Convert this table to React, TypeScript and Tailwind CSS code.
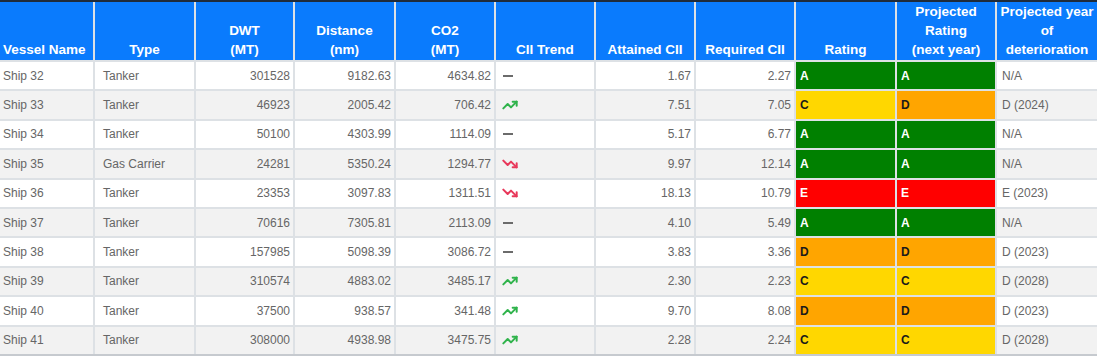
import React from "react"
import { TrendingUp, TrendingDown } from "lucide-react"

type Trend = "flat" | "up" | "down"

const rows: [string, string, string, string, string, Trend, string, string, string, string, string][] = [
  ["Ship 32", "Tanker", "301528", "9182.63", "4634.82", "flat", "1.67", "2.27", "A", "A", "N/A"],
  ["Ship 33", "Tanker", "46923", "2005.42", "706.42", "up", "7.51", "7.05", "C", "D", "D (2024)"],
  ["Ship 34", "Tanker", "50100", "4303.99", "1114.09", "flat", "5.17", "6.77", "A", "A", "N/A"],
  ["Ship 35", "Gas Carrier", "24281", "5350.24", "1294.77", "down", "9.97", "12.14", "A", "A", "N/A"],
  ["Ship 36", "Tanker", "23353", "3097.83", "1311.51", "down", "18.13", "10.79", "E", "E", "E (2023)"],
  ["Ship 37", "Tanker", "70616", "7305.81", "2113.09", "flat", "4.10", "5.49", "A", "A", "N/A"],
  ["Ship 38", "Tanker", "157985", "5098.39", "3086.72", "flat", "3.83", "3.36", "D", "D", "D (2023)"],
  ["Ship 39", "Tanker", "310574", "4883.02", "3485.17", "up", "2.30", "2.23", "C", "C", "D (2028)"],
  ["Ship 40", "Tanker", "37500", "938.57", "341.48", "up", "9.70", "8.08", "D", "D", "D (2023)"],
  ["Ship 41", "Tanker", "308000", "4938.98", "3475.75", "up", "2.28", "2.24", "C", "C", "D (2028)"],
]

const ratingClass: Record<string, string> = {
  A: "bg-[#008000] text-white",
  C: "bg-[#ffd700] text-[#1a1a1a]",
  D: "bg-[#ffa500] text-[#1a1a1a]",
  E: "bg-[#ff0000] text-white",
}

const headers: { label: React.ReactNode; align: string }[] = [
  { label: "Vessel Name", align: "justify-start pl-[3px]" },
  { label: "Type", align: "justify-center" },
  { label: <>DWT<br />(MT)</>, align: "justify-center" },
  { label: <>Distance<br />(nm)</>, align: "justify-center" },
  { label: <>CO2<br />(MT)</>, align: "justify-center" },
  { label: "CII Trend", align: "justify-center" },
  { label: "Attained CII", align: "justify-center" },
  { label: "Required CII", align: "justify-center" },
  { label: "Rating", align: "justify-center" },
  { label: <>Projected<br />Rating<br />(next year)</>, align: "justify-center" },
  { label: <>Projected year<br />of<br />deterioration</>, align: "justify-center" },
]

function TrendIcon({ t }: { t: Trend }) {
  if (t === "up") return <TrendingUp size={16} strokeWidth={3} className="text-[#2fb34b]" />
  if (t === "down") return <TrendingDown size={16} strokeWidth={3} className="text-[#e8385a]" />
  return <div className="w-[10px] h-[2px] bg-[#6b6b6b] ml-[1px]" />
}

export default function App() {
  return (
    <div className="w-[1097px] h-[358px] overflow-hidden bg-white border-t-2 border-[#1f2b3a] font-['Liberation_Sans',Arial,sans-serif]">
      <div className="grid grid-cols-[93px_99px_97px_99px_98px_98px_98px_98px_99px_98px_100px] grid-rows-[58px_repeat(10,27.4px)] gap-[2px] bg-[#dde1e5] border-b-2 border-[#c6cacf]">
        {headers.map((h, i) => (
          <div
            key={i}
            className={`bg-[#0a7bfd] text-white font-bold text-[13.5px] leading-[19px] flex items-end text-center pb-[1px] px-[1px] whitespace-nowrap ${h.align}`}
          >
            <span>{h.label}</span>
          </div>
        ))}
        {rows.map((r, ri) => {
          const bg = ri % 2 === 0 ? "bg-white" : "bg-[#f2f2f2]"
          const cell = `${bg} flex items-center text-[12px] text-[#666]`
          return (
            <React.Fragment key={ri}>
              <div className={`${cell} pl-[3px]`}>{r[0]}</div>
              <div className={`${cell} pl-[8px]`}>{r[1]}</div>
              <div className={`${cell} justify-end pr-[3px]`}>{r[2]}</div>
              <div className={`${cell} justify-end pr-[3px]`}>{r[3]}</div>
              <div className={`${cell} justify-end pr-[3px]`}>{r[4]}</div>
              <div className={`${cell} pl-[6px]`}><TrendIcon t={r[5]} /></div>
              <div className={`${cell} justify-end pr-[3px]`}>{r[6]}</div>
              <div className={`${cell} justify-end pr-[3px]`}>{r[7]}</div>
              <div className={`flex items-center pl-[4px] text-[12px] font-bold ${ratingClass[r[8]]}`}>{r[8]}</div>
              <div className={`flex items-center pl-[4px] text-[12px] font-bold ${ratingClass[r[9]]}`}>{r[9]}</div>
              <div className={`${cell} pl-[5px]`}>{r[10]}</div>
            </React.Fragment>
          )
        })}
      </div>
    </div>
  )
}
